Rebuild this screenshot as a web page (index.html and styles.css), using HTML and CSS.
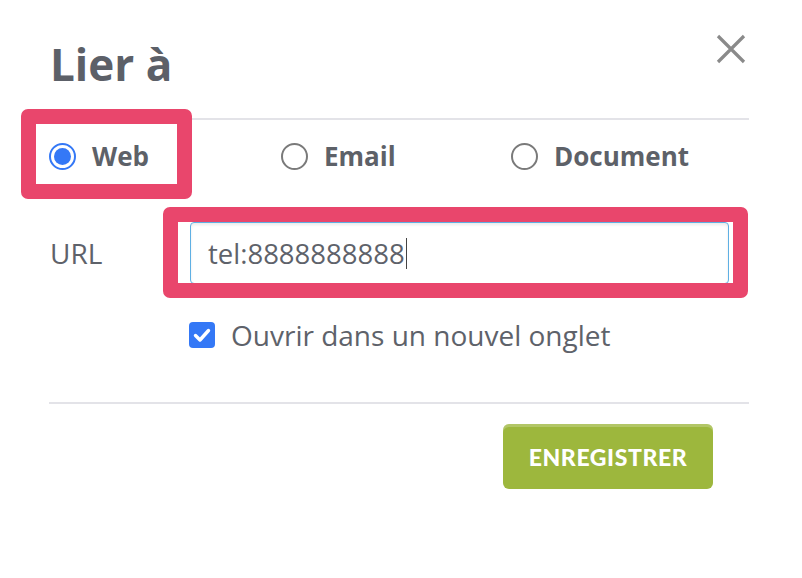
FILE: index.html
```html
<!DOCTYPE html>
<html lang="fr">
<head>
<meta charset="utf-8">
<title>Lier à</title>
<link rel="stylesheet" href="styles.css">
</head>
<body>
<div class="dialog">
  <div class="header">
    <h1 class="title">Lier à</h1>
    <button class="close" aria-label="Fermer">
      <svg width="30" height="30" viewBox="0 0 30 30"><path d="M2 2 L28 28 M28 2 L2 28" stroke="#8a8a8a" stroke-width="3.2" fill="none"/></svg>
    </button>
  </div>
  <div class="divider"></div>
  <div class="radios">
    <label class="radio"><span class="dot checked"></span><span>Web</span></label>
    <label class="radio"><span class="dot"></span><span>Email</span></label>
    <label class="radio"><span class="dot"></span><span>Document</span></label>
  </div>
  <div class="url-row">
    <span class="url-label">URL</span>
    <div class="input"><span>tel:8888888888</span><span class="caret"></span></div>
  </div>
  <div class="check-row">
    <span class="checkbox"><svg width="26" height="26" viewBox="0 0 26 26"><path d="M6.5 13.5 L11 18 L19.5 8.5" stroke="#fff" stroke-width="3.4" fill="none" stroke-linecap="round" stroke-linejoin="round"/></svg></span>
    <span class="check-label">Ouvrir dans un nouvel onglet</span>
  </div>
  <div class="divider divider2"></div>
  <div class="footer">
    <button class="save">ENREGISTRER</button>
  </div>
</div>
<div class="highlight hl-web"></div>
<div class="highlight hl-url"></div>
</body>
</html>
```
FILE: styles.css
```css
html, body {
  margin: 0;
  padding: 0;
  background: #ffffff;
}
body {
  position: relative;
  width: 802px;
  height: 578px;
  overflow: hidden;
  font-family: "Open Sans", "Liberation Sans", sans-serif;
  color: #5e626a;
}
.dialog {
  width: 700px;
  padding: 35px 0 0 49px;
}
.header {
  display: flex;
  justify-content: space-between;
  align-items: flex-start;
}
.title {
  margin: 0;
  padding: 1px 0 0 1px;
  height: 55px;
  font-size: 44px;
  line-height: 56px;
  font-weight: 700;
  color: #5c6068;
}
.close {
  border: 0;
  background: none;
  padding: 0;
  margin: -1px 3px 0 0;
  width: 30px;
  height: 30px;
  display: block;
}
.close svg { display: block; }
.divider {
  height: 2px;
  background: #e3e3e8;
  margin-top: 27px;
}
.radios {
  display: grid;
  grid-template-columns: 232px 230px auto;
  align-items: center;
  height: 72px;
}
.radio {
  display: flex;
  align-items: center;
  gap: 16px;
  font-size: 26px;
  font-weight: 700;
  color: #5d6168;
}
.dot {
  box-sizing: border-box;
  width: 27px;
  height: 27px;
  border-radius: 50%;
  border: 2px solid #7a7a7a;
  display: flex;
  align-items: center;
  justify-content: center;
}
.dot.checked {
  border-color: #3478f6;
}
.dot.checked::after {
  content: "";
  width: 17px;
  height: 17px;
  border-radius: 50%;
  background: #3478f6;
}
.url-row {
  display: flex;
  align-items: center;
  margin-top: 30px;
}
.url-label {
  width: 140px;
  font-size: 28px;
  line-height: 40px;
  padding-left: 1px;
}
.input {
  box-sizing: border-box;
  width: 539px;
  height: 62px;
  border: 1.5px solid #5fb0e4;
  border-radius: 4px;
  box-shadow: inset 0 2px 3px rgba(0,0,0,0.08);
  display: flex;
  align-items: center;
  padding-left: 17px;
  font-size: 27.5px;
  color: #5e626a;
}
.caret {
  display: inline-block;
  width: 1.5px;
  height: 31px;
  background: #444;
  margin-left: 1px;
}
.check-row {
  display: flex;
  align-items: center;
  gap: 16px;
  margin-top: 31px;
  padding-left: 140px;
}
.checkbox {
  width: 26px;
  height: 26px;
  border-radius: 4px;
  background: #3478f6;
  display: block;
}
.checkbox svg { display: block; }
.check-label {
  font-size: 28px;
  line-height: 40px;
  color: #5e626a;
}
.divider2 {
  margin-top: 47px;
}
.footer {
  display: flex;
  justify-content: flex-end;
  padding-right: 36px;
  margin-top: 20px;
}
.save {
  width: 210px;
  height: 65px;
  border: 0;
  border-radius: 6px;
  background: #9db73d;
  box-shadow: inset 0 3px 0 rgba(255,255,255,0.22);
  color: #ffffff;
  font-family: "Lato", "Open Sans", sans-serif;
  font-weight: 900;
  font-size: 23px;
  letter-spacing: 0.6px;
  padding: 0;
}
.highlight {
  position: absolute;
  box-sizing: border-box;
  border: 15px solid #e9466c;
  border-radius: 7px;
}
.hl-web {
  left: 21px;
  top: 109px;
  width: 171px;
  height: 90px;
}
.hl-url {
  left: 163px;
  top: 207px;
  width: 585px;
  height: 91px;
}
```
